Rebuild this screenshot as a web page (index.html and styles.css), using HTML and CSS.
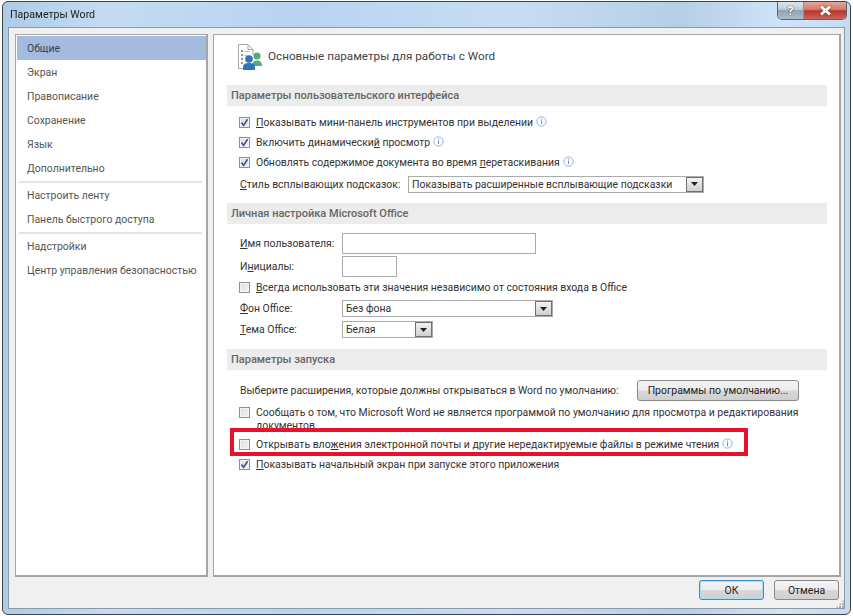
FILE: index.html
```html
<!DOCTYPE html>
<html lang="ru">
<head>
<meta charset="utf-8">
<title>Параметры Word</title>
<link rel="stylesheet" href="styles.css">
</head>
<body>
<svg class="defs" width="0" height="0">
  <symbol id="tick" viewBox="0 0 11 11"><path d="M2.500 5.500 L4.600 8.400 L8.600 2.200" fill="none" stroke="#3a4fa0" stroke-width="1.600"/></symbol>
  <symbol id="info" viewBox="0 0 11 11"><circle cx="5.500" cy="5.500" r="4.600" fill="#fff" stroke="#8fb2e2" stroke-width="1"/><rect x="5" y="2.600" width="1" height="1" fill="#5b8bd0"/><rect x="5" y="4.500" width="1" height="3.600" fill="#5b8bd0"/></symbol>
  <symbol id="down" viewBox="0 0 7 4"><path d="M0 0H7L3.500 4Z" fill="#222"/></symbol>
</svg>
<div class="window">
  <header class="titlebar">
    <span class="title">Параметры Word</span>
    <div class="caption">
      <span class="cap help">?</span>
      <span class="cap close">
        <svg width="13" height="11" viewBox="0 0 13 11"><path d="M2 1.500 L11 9.500 M11 1.500 L2 9.500" stroke="#fff" stroke-width="2.800" fill="none"/></svg>
      </span>
    </div>
  </header>
  <div class="client">
    <div class="panes">
      <nav class="nav">
        <div class="nav-item selected">Общие</div>
        <div class="nav-item">Экран</div>
        <div class="nav-item">Правописание</div>
        <div class="nav-item">Сохранение</div>
        <div class="nav-item">Язык</div>
        <div class="nav-item">Дополнительно</div>
        <div class="nav-sep"></div>
        <div class="nav-item">Настроить ленту</div>
        <div class="nav-item">Панель быстрого доступа</div>
        <div class="nav-sep"></div>
        <div class="nav-item">Надстройки</div>
        <div class="nav-item">Центр управления безопасностью</div>
      </nav>
      <main class="content">
        <div class="page-head">
          <svg class="page-icon" width="26" height="27" viewBox="0 0 26 27">
            <path d="M1.500 1.500H11L16 6.500V12M1.500 1.500V25.500H6" fill="#fff" stroke="#a8a8a8" stroke-width="1"/>
            <path d="M11 1.500V6.500H16" fill="none" stroke="#a8a8a8" stroke-width="1"/>
            <g fill="#9a9a9a"><rect x="4" y="7" width="2" height="2"/><rect x="4" y="11" width="2" height="2"/><rect x="4" y="15" width="2" height="2"/><rect x="4" y="19" width="2" height="2"/></g>
            <g fill="#c8c8c8"><rect x="7" y="8" width="6" height="1"/><rect x="7" y="12" width="4" height="1"/></g>
            <circle cx="20" cy="13" r="3.600" fill="#5aa77c"/>
            <path d="M15 23c0-4 2-5.500 5-5.500s5 1.500 5 5.500z" fill="#5aa77c"/>
            <circle cx="12" cy="16" r="3.800" fill="#2f74b5"/>
            <path d="M6 27v-2.500c0-3.500 2.500-4.500 6-4.500s6 1 6 4.500V27z" fill="#2f74b5"/>
          </svg>
          <span class="page-title">Основные параметры для работы с Word</span>
        </div>

        <h2 class="section">Параметры пользовательского интерфейса</h2>
        <div class="group first">
          <div class="row"><span class="check"><svg width="11" height="11"><use href="#tick"/></svg></span><span><u>П</u>оказывать мини-панель инструментов при выделении</span><svg class="info" width="11" height="11"><use href="#info"/></svg></div>
          <div class="row"><span class="check"><svg width="11" height="11"><use href="#tick"/></svg></span><span>Включить динамически<u>й</u> просмотр</span><svg class="info" width="11" height="11"><use href="#info"/></svg></div>
          <div class="row"><span class="check"><svg width="11" height="11"><use href="#tick"/></svg></span><span>Обновлять содержимое документа во время <u>п</u>еретаскивания</span><svg class="info" width="11" height="11"><use href="#info"/></svg></div>
          <div class="field tip"><span class="tip-label"><u>С</u>тиль всплывающих подсказок:</span><div class="select w-tip"><span class="select-value">Показывать расширенные всплывающие подсказки</span><span class="arrow"><svg width="7" height="4"><use href="#down"/></svg></span></div></div>
        </div>

        <h2 class="section">Личная настройка Microsoft Office</h2>
        <div class="group personal">
          <div class="field name"><span class="label"><u>И</u>мя пользователя:</span><input class="input w-name" type="text"></div>
          <div class="field initials"><span class="label">И<u>н</u>ициалы:</span><input class="input w-init" type="text"></div>
          <div class="row always"><span class="check"></span><span><u>В</u>сегда использовать эти значения независимо от состояния входа в Office</span></div>
          <div class="field bg"><span class="label"><u>Ф</u>он Office:</span><div class="select w-bg"><span class="select-value">Без фона</span><span class="arrow"><svg width="7" height="4"><use href="#down"/></svg></span></div></div>
          <div class="field theme"><span class="label"><u>Т</u>ема Office:</span><div class="select w-theme"><span class="select-value">Белая</span><span class="arrow"><svg width="7" height="4"><use href="#down"/></svg></span></div></div>
        </div>

        <h2 class="section">Параметры запуска</h2>
        <div class="group startup">
          <div class="ext"><span class="ext-label">Выберите расширения, которые должны открываться в Word по умолчанию:</span><button class="btn btn-default-apps" type="button">Программы по умолчанию...</button></div>
          <div class="row wrap"><span class="check"></span><span class="wrap-text">Сообщать о том, что Microsoft Word не является программой по умолчанию для просмотра и редактирования документов</span></div>
          <div class="row marked"><span class="check"></span><span>Открывать вло<u>ж</u>ения электронной почты и другие нередактируемые файлы в режиме чтения</span><svg class="info" width="11" height="11"><use href="#info"/></svg><span class="red-box"></span></div>
          <div class="row last"><span class="check"><svg width="11" height="11"><use href="#tick"/></svg></span><span><u>П</u>оказывать начальный экран при запуске этого приложения</span></div>
        </div>
      </main>
    </div>
    <footer class="footer">
      <button class="btn btn-foot btn-ok" type="button">ОК</button>
      <button class="btn btn-foot" type="button">Отмена</button>
      <span class="grip"></span>
    </footer>
  </div>
</div>
</body>
</html>
```

FILE: styles.css
```css
* { box-sizing: border-box; }
html, body { margin: 0; height: 100%; background: #fff; overflow: hidden; }
body { padding: 1px 0 0 2px; font-family: Roboto, "Open Sans", sans-serif; font-size: 10.45px; color: #3c3c3c; }
.defs { position: absolute; }
u { text-decoration: underline; text-underline-offset: 1px; }

.window { width: 849px; height: 614px; display: flex; flex-direction: column; border: 1px solid #3e4448; border-radius: 6px; background: linear-gradient(90deg, #aecbe6 0%, #c3dcf3 12%, #b6d4f1 35%, #c6def5 60%, #b4cfe8 80%, #cfe4f9 92%, #c4dcf2 100%); padding: 0 5px 5px; filter: blur(0.3px); }

.titlebar { height: 25px; flex: none; display: flex; justify-content: space-between; align-items: flex-start; }
.title { font-size: 10.6px; color: #222; margin: 6px 0 0 2px; }
.caption { display: flex; height: 18px; margin-right: -2px; border: 1px solid #5a6570; border-top: 0; border-radius: 0 0 5px 5px; overflow: hidden; }
.cap { display: flex; align-items: center; justify-content: center; }
.help { width: 26px; font-size: 13px; font-weight: 700; color: #fff; text-shadow: 0 0 1px #333, 0 0 1px #333; background: linear-gradient(180deg, #dce6ee 0%, #bccad6 45%, #8ea4b4 50%, #a9bcc9 100%); border-right: 1px solid #8a949c; }
.close { width: 42px; background: linear-gradient(180deg, #e2a79e 0%, #d4766b 45%, #b8362b 52%, #c9655c 100%); }
.close svg { filter: drop-shadow(0 0 1px #7a2a22); }

.client { flex: 1; min-height: 0; display: flex; flex-direction: column; background: #f0f0f0; border: 1px solid #8c9aa6; padding: 6px 3px 0 6px; }
.panes { height: 543px; flex: none; display: flex; gap: 5px; }

.nav { width: 193px; flex: none; background: #fff; border: 1px solid #a5a5a5; border-width: 1px 2px 2px 1px; padding: 1px 0 0 1px; color: #555; }
.nav-item { height: 24px; line-height: 26px; padding-left: 10px; white-space: nowrap; }
.nav-item.selected { background: #a4bade; width: 189px; color: #3a4250; }
.nav-sep { height: 2px; margin: 1px 4px 0 2px; background: #e4e4e4; }

.content { flex: 1; min-width: 0; background: #fff; border: 1px solid #a5a5a5; border-width: 1px 2px 2px 1px; padding: 0 13px; }
.page-head { height: 50px; display: flex; align-items: flex-start; padding: 8px 0 0 10px; }
.page-icon { flex: none; }
.page-title { font-size: 11.7px; margin: 6px 0 0 5px; color: #444; }

.section { margin: 0; height: 21px; line-height: 21px; width: 600px; background: #ececec; padding-left: 4px; font-size: 11px; font-weight: 500; color: #666; white-space: nowrap; }

.group { padding-left: 12px; color: #333; }
.row { display: flex; align-items: center; height: 20px; white-space: nowrap; }
.check { width: 11px; height: 11px; flex: none; margin-right: 6px; border: 1px solid #8e8f8f; background: linear-gradient(135deg, #dcdcdc, #f6f6f6); box-shadow: inset 0 0 0 1px #f4f4f4; display: flex; align-items: center; justify-content: center; }
.check svg { flex: none; }
.info { margin-left: 3px; flex: none; margin-top: -2px; }

.first { padding-top: 6px; padding-bottom: 9px; }
.field { display: flex; align-items: center; white-space: nowrap; }
.label { width: 103px; flex: none; padding-left: 1px; }
.tip { margin-top: 2px; height: 20px; }
.tip-label { width: 169px; flex: none; padding-left: 1px; }

.select { height: 17px; background: #fff; border: 1px solid #ababab; display: flex; align-items: center; justify-content: space-between; padding: 0 0 0 3px; }
.select-value { color: #333; }
.arrow { width: 17px; height: 15px; background: linear-gradient(180deg, #f2f2f2, #cfcfcf); border: 1px solid #707070; display: flex; align-items: center; justify-content: center; flex: none; }
.arrow svg { display: block; }
.w-tip { width: 296px; }
.w-bg { width: 211px; }
.w-theme { width: 91px; }

.input { height: 21px; background: #fff; border: 1px solid #ababab; padding: 0; margin: 0; display: block; }
.w-name { width: 194px; }
.w-init { width: 55px; }

.personal { padding-top: 9px; padding-bottom: 11px; }
.name { height: 21px; }
.initials { height: 21px; margin-top: 2px; }
.always { height: 20px; }
.bg { margin-top: 3px; height: 17px; }
.theme { margin-top: 4px; height: 17px; }

.startup { padding-top: 10px; }
.ext { display: flex; align-items: center; height: 21px; padding-left: 1px; }
.ext-label { width: 397px; flex: none; white-space: nowrap; }
.btn { font: inherit; color: #222; background: linear-gradient(180deg, #f4f4f4 0%, #ececec 48%, #d8d8d8 52%, #cfcfcf 100%); border: 1px solid #8a8a8a; border-radius: 3px; padding: 0; height: 21px; }
.btn-default-apps { width: 162px; }
.wrap { height: 26px; margin-top: 4px; align-items: flex-start; white-space: normal; }
.wrap .check { margin-top: 2px; }
.wrap-text { width: 570px; line-height: 13px; display: block; margin-top: 1px; }
.marked { position: relative; height: 20px; margin-top: 3px; }
.red-box { position: absolute; left: -9px; top: -6px; width: 518px; height: 28px; border: 4px solid #e8112d; pointer-events: none; }
.last { height: 20px; }

.footer { position: relative; flex: 1; display: flex; justify-content: flex-end; gap: 10px; padding: 3px 2px 0 0; align-items: flex-start; }
.btn-foot { width: 65px; height: 20px; }
.btn-ok { border-color: #3b8fc4; box-shadow: inset 0 0 0 1px #a8def5; }
.grip { position: absolute; right: -3px; bottom: 0; width: 8px; height: 8px; background: radial-gradient(circle at 1px 1px, #a9a9a9 1px, transparent 1px) 0 0 / 3px 3px; clip-path: polygon(100% 0, 100% 100%, 0 100%); }
```
